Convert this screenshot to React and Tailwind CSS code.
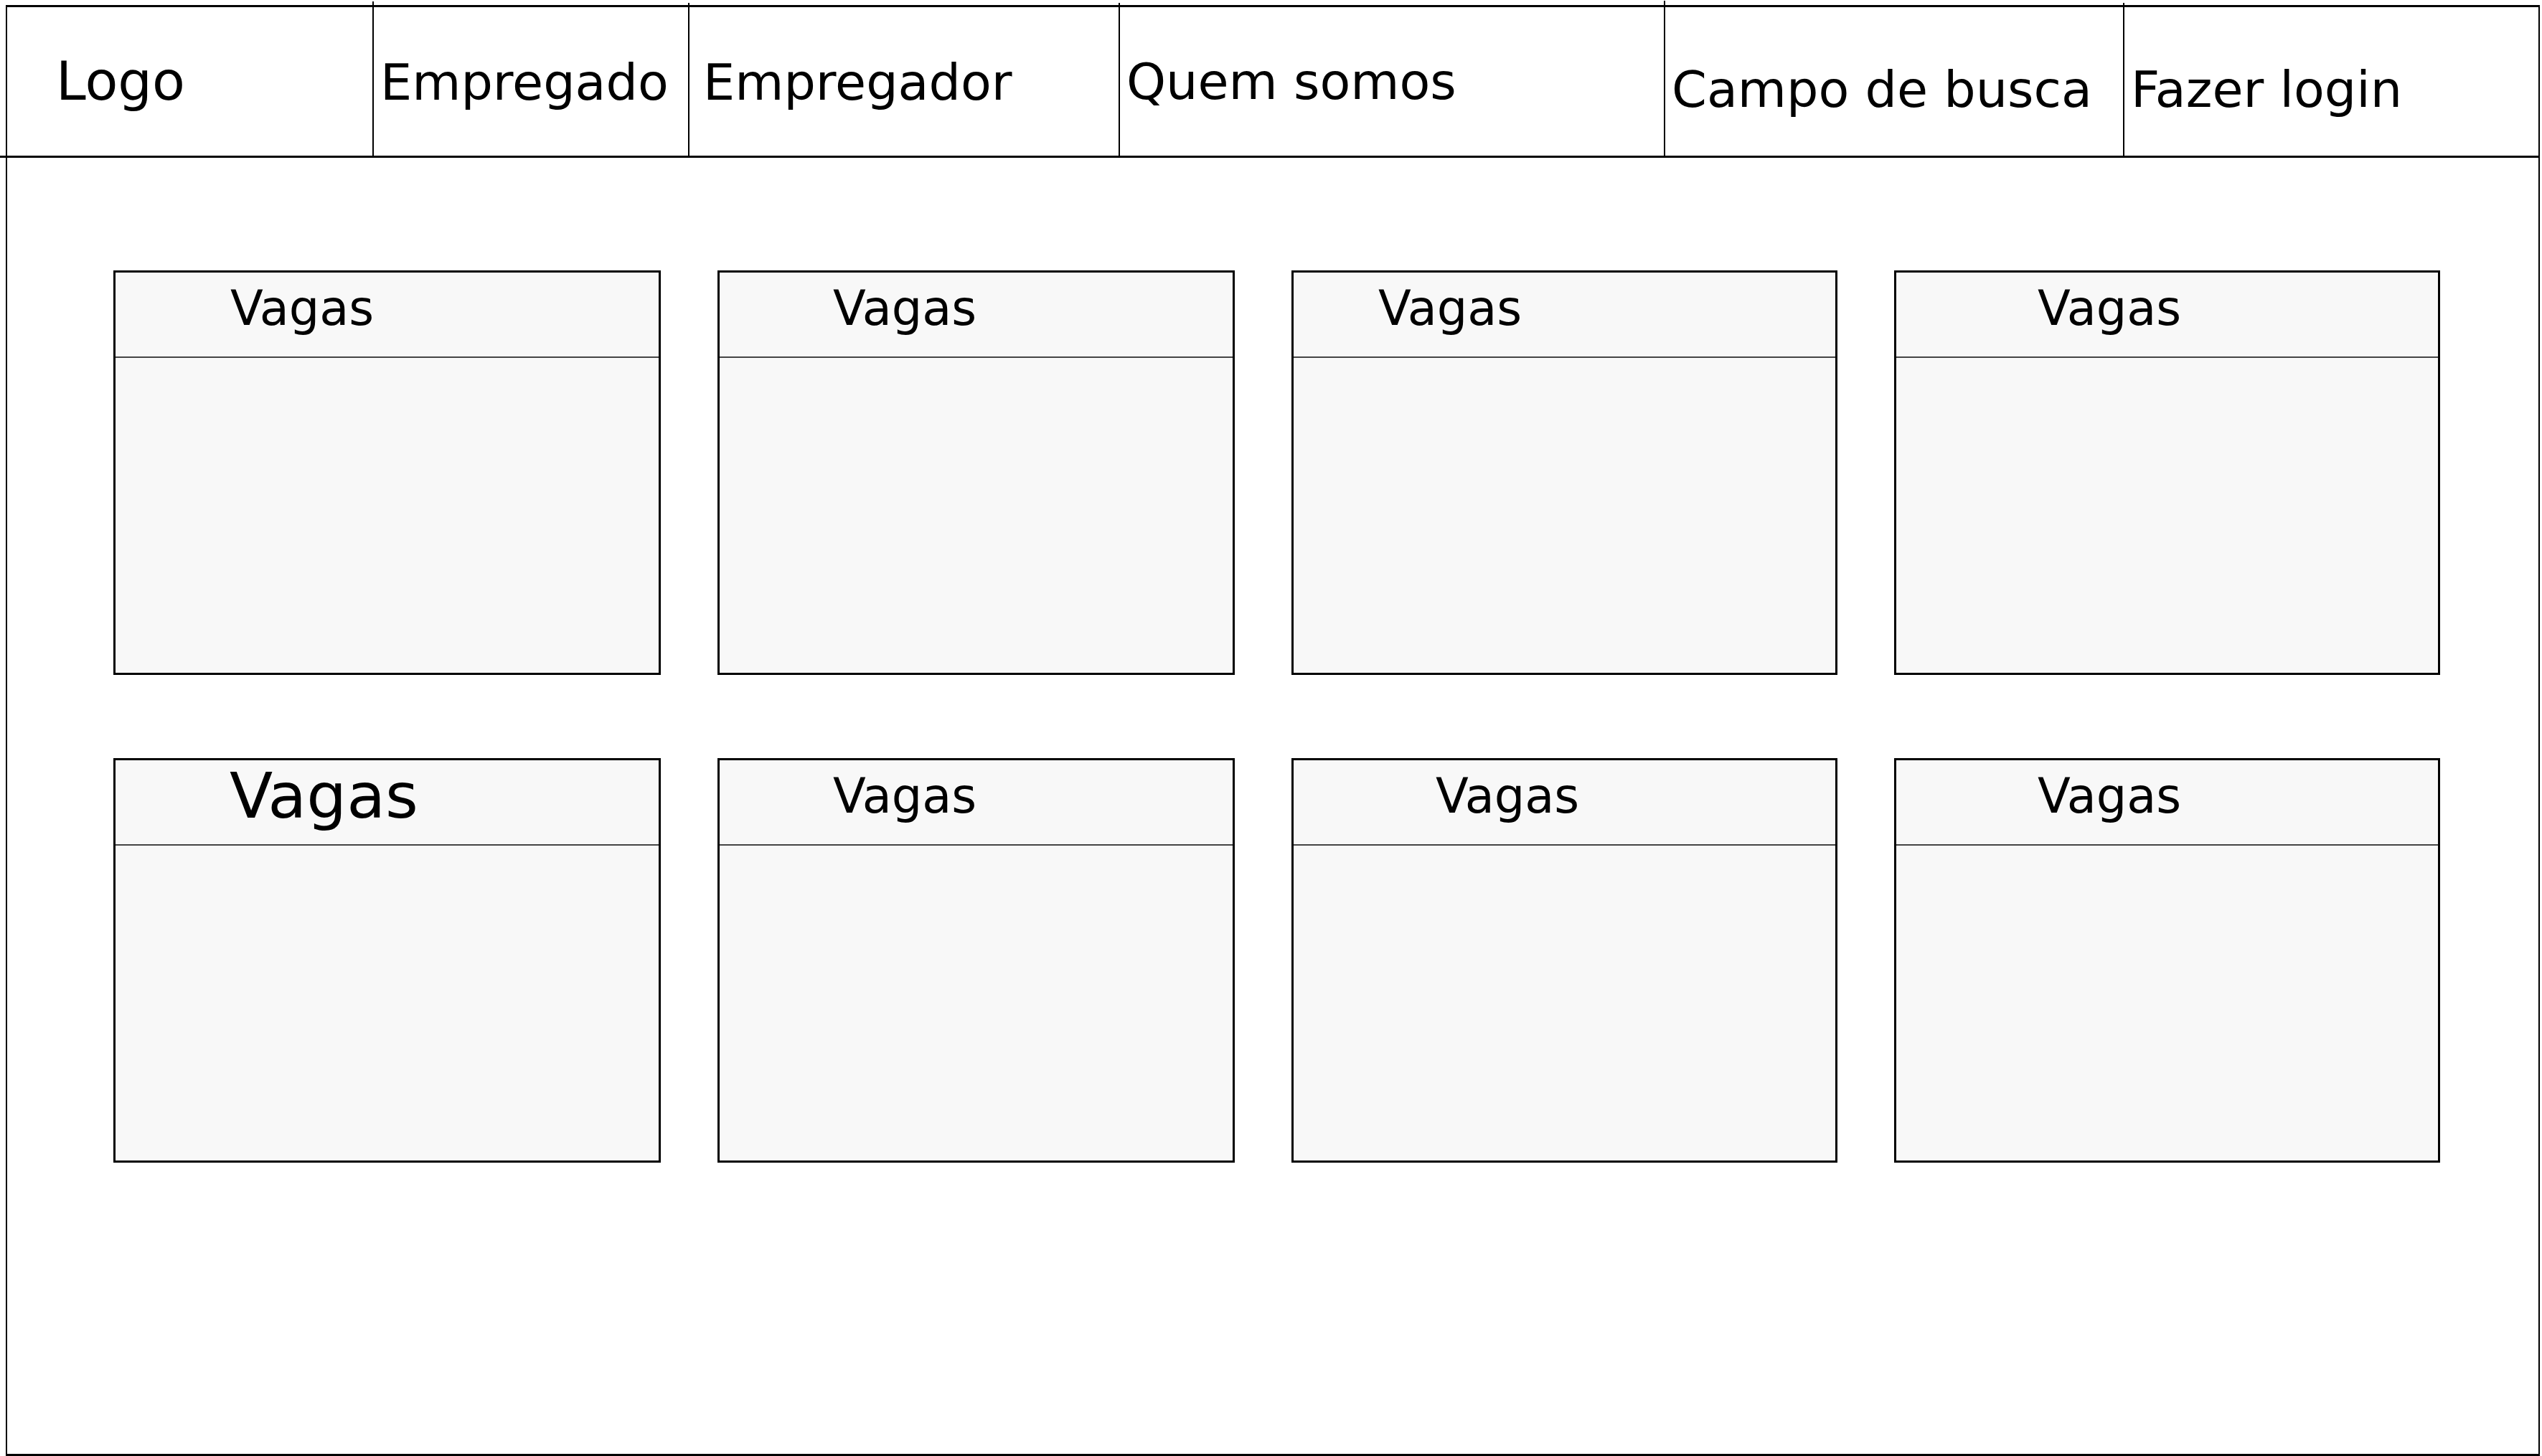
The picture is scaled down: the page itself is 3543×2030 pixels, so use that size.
const navItems = [
  { label: 'Logo', width: 'w-[509px]', size: 'text-[75px]', pad: 'pl-[68px] pt-[66px]', first: true },
  { label: 'Empregado', width: 'w-[440px]', size: 'text-[70px]', pad: 'pl-[9px] pt-[70px]', tick: 'h-[8px]' },
  { label: 'Empregador', width: 'w-[600px]', size: 'text-[70px]', pad: 'pl-[19px] pt-[70px]', tick: 'h-[6px]' },
  { label: 'Quem somos', width: 'w-[760px]', size: 'text-[70px]', pad: 'pl-[9px] pt-[69px]', tick: 'h-[6px]' },
  { label: 'Campo de busca', width: 'w-[640px]', size: 'text-[70px]', pad: 'pl-[9px] pt-[80px]', tick: 'h-[9px]' },
  { label: 'Fazer login', width: 'flex-1', size: 'text-[70px]', pad: 'pl-[9px] pt-[80px]', tick: 'h-[6px]' },
];

const vagas = [
  { pad: 'pl-[160px] pt-[17px]', size: 'text-[67px]' },
  { pad: 'pl-[158px] pt-[17px]', size: 'text-[67px]' },
  { pad: 'pl-[118px] pt-[17px]', size: 'text-[67px]' },
  { pad: 'pl-[197px] pt-[17px]', size: 'text-[67px]' },
  { pad: 'pl-[159px] pt-[6px]', size: 'text-[88px]' },
  { pad: 'pl-[158px] pt-[17px]', size: 'text-[67px]' },
  { pad: 'pl-[198px] pt-[17px]', size: 'text-[67px]' },
  { pad: 'pl-[197px] pt-[17px]', size: 'text-[67px]' },
];

function NavCell({ item }) {
  return (
    <div
      className={`relative h-full ${item.width} ${item.pad} ${
        item.first ? '' : 'border-l-2 border-black'
      }`}
    >
      {!item.first && (
        <span className={`absolute -left-[2px] bottom-full w-[2px] bg-black ${item.tick}`} />
      )}
      <span className={`block whitespace-nowrap leading-none text-black ${item.size}`}>
        {item.label}
      </span>
    </div>
  );
}

function VagaCard({ vaga }) {
  return (
    <div className="flex h-[564px] flex-col border-[3px] border-black bg-[#f8f8f8]">
      <div className={`h-[119px] border-b-2 border-[#444] ${vaga.pad}`}>
        <span className={`block leading-none text-black ${vaga.size}`}>Vagas</span>
      </div>
      <div className="flex-1" />
    </div>
  );
}

export default function App() {
  return (
    <div className="h-[2030px] w-[3543px] overflow-hidden bg-white pl-[8px] pt-[7px] font-['DejaVu_Sans','Liberation_Sans',sans-serif]">
      <div className="flex h-[2023px] w-[3532px] flex-col border-x-2 border-y-[3px] border-black">
        <header className="relative flex h-[210px] border-b-[3px] border-black">
          <span className="absolute -bottom-[3px] -left-[10px] h-[3px] w-[10px] bg-black" />
          {navItems.map((item) => (
            <NavCell key={item.label} item={item} />
          ))}
        </header>

        <main className="pl-[148px] pt-[157px]">
          <div className="grid grid-cols-[763px_721px_761px_761px] gap-x-[79px] gap-y-[116px]">
            {vagas.map((vaga, index) => (
              <VagaCard key={index} vaga={vaga} />
            ))}
          </div>
        </main>
      </div>
    </div>
  );
}
